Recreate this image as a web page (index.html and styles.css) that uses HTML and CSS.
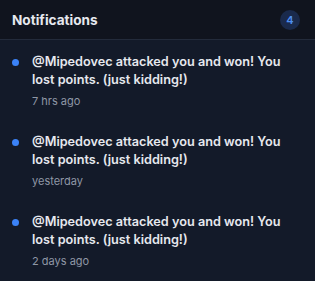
FILE: index.html
```html
<!DOCTYPE html>
<html>
<head>
<meta charset="utf-8">
<link rel="stylesheet" href="styles.css">
</head>
<body>
<div class="panel">
  <div class="header">
    <span class="title">Notifications</span>
    <span class="badge">4</span>
  </div>
  <div class="list">
    <div class="item">
      <span class="dot"></span>
      <div class="content">
        <div class="msg">@Mipedovec attacked you and won! You lost points. (just kidding!)</div>
        <div class="time">7 hrs ago</div>
      </div>
    </div>
    <div class="item">
      <span class="dot"></span>
      <div class="content">
        <div class="msg">@Mipedovec attacked you and won! You lost points. (just kidding!)</div>
        <div class="time">yesterday</div>
      </div>
    </div>
    <div class="item">
      <span class="dot"></span>
      <div class="content">
        <div class="msg">@Mipedovec attacked you and won! You lost points. (just kidding!)</div>
        <div class="time">2 days ago</div>
      </div>
    </div>
  </div>
</div>
</body>
</html>
```
FILE: styles.css
```css
html, body {
  margin: 0;
  padding: 0;
  background: #131a29;
}
.panel {
  width: 315px;
  height: 281px;
  background: #131a29;
  font-family: Inter, "Noto Sans", sans-serif;
  overflow: hidden;
}
.header {
  height: 40px;
  box-sizing: border-box;
  border-bottom: 1px solid #232b3b;
  background: #10141e;
  display: flex;
  align-items: center;
  justify-content: space-between;
  padding: 0 15px 0 12px;
}
.title {
  color: #e6e8ee;
  font-size: 13.6px;
  font-weight: 700;
}
.badge {
  width: 20px;
  height: 20px;
  border-radius: 50%;
  background: #1a2a4c;
  color: #4f8ff0;
  font-size: 11px;
  font-weight: 600;
  display: flex;
  align-items: center;
  justify-content: center;
}
.list {
  display: flex;
  flex-direction: column;
}
.item {
  display: flex;
  gap: 13px;
  padding: 13px 16px 12px 12px;
  height: 80px;
  box-sizing: border-box;
}
.dot {
  flex: none;
  width: 7px;
  height: 7px;
  border-radius: 50%;
  background: #3b82f6;
  margin-top: 6px;
}
.content {
  flex: 1;
}
.msg {
  color: #e6e8ee;
  font-size: 12.7px;
  font-weight: 600;
  line-height: 18px;
}
.time {
  margin-top: 4px;
  color: #8f97a6;
  font-size: 11px;
  line-height: 16px;
}
```
